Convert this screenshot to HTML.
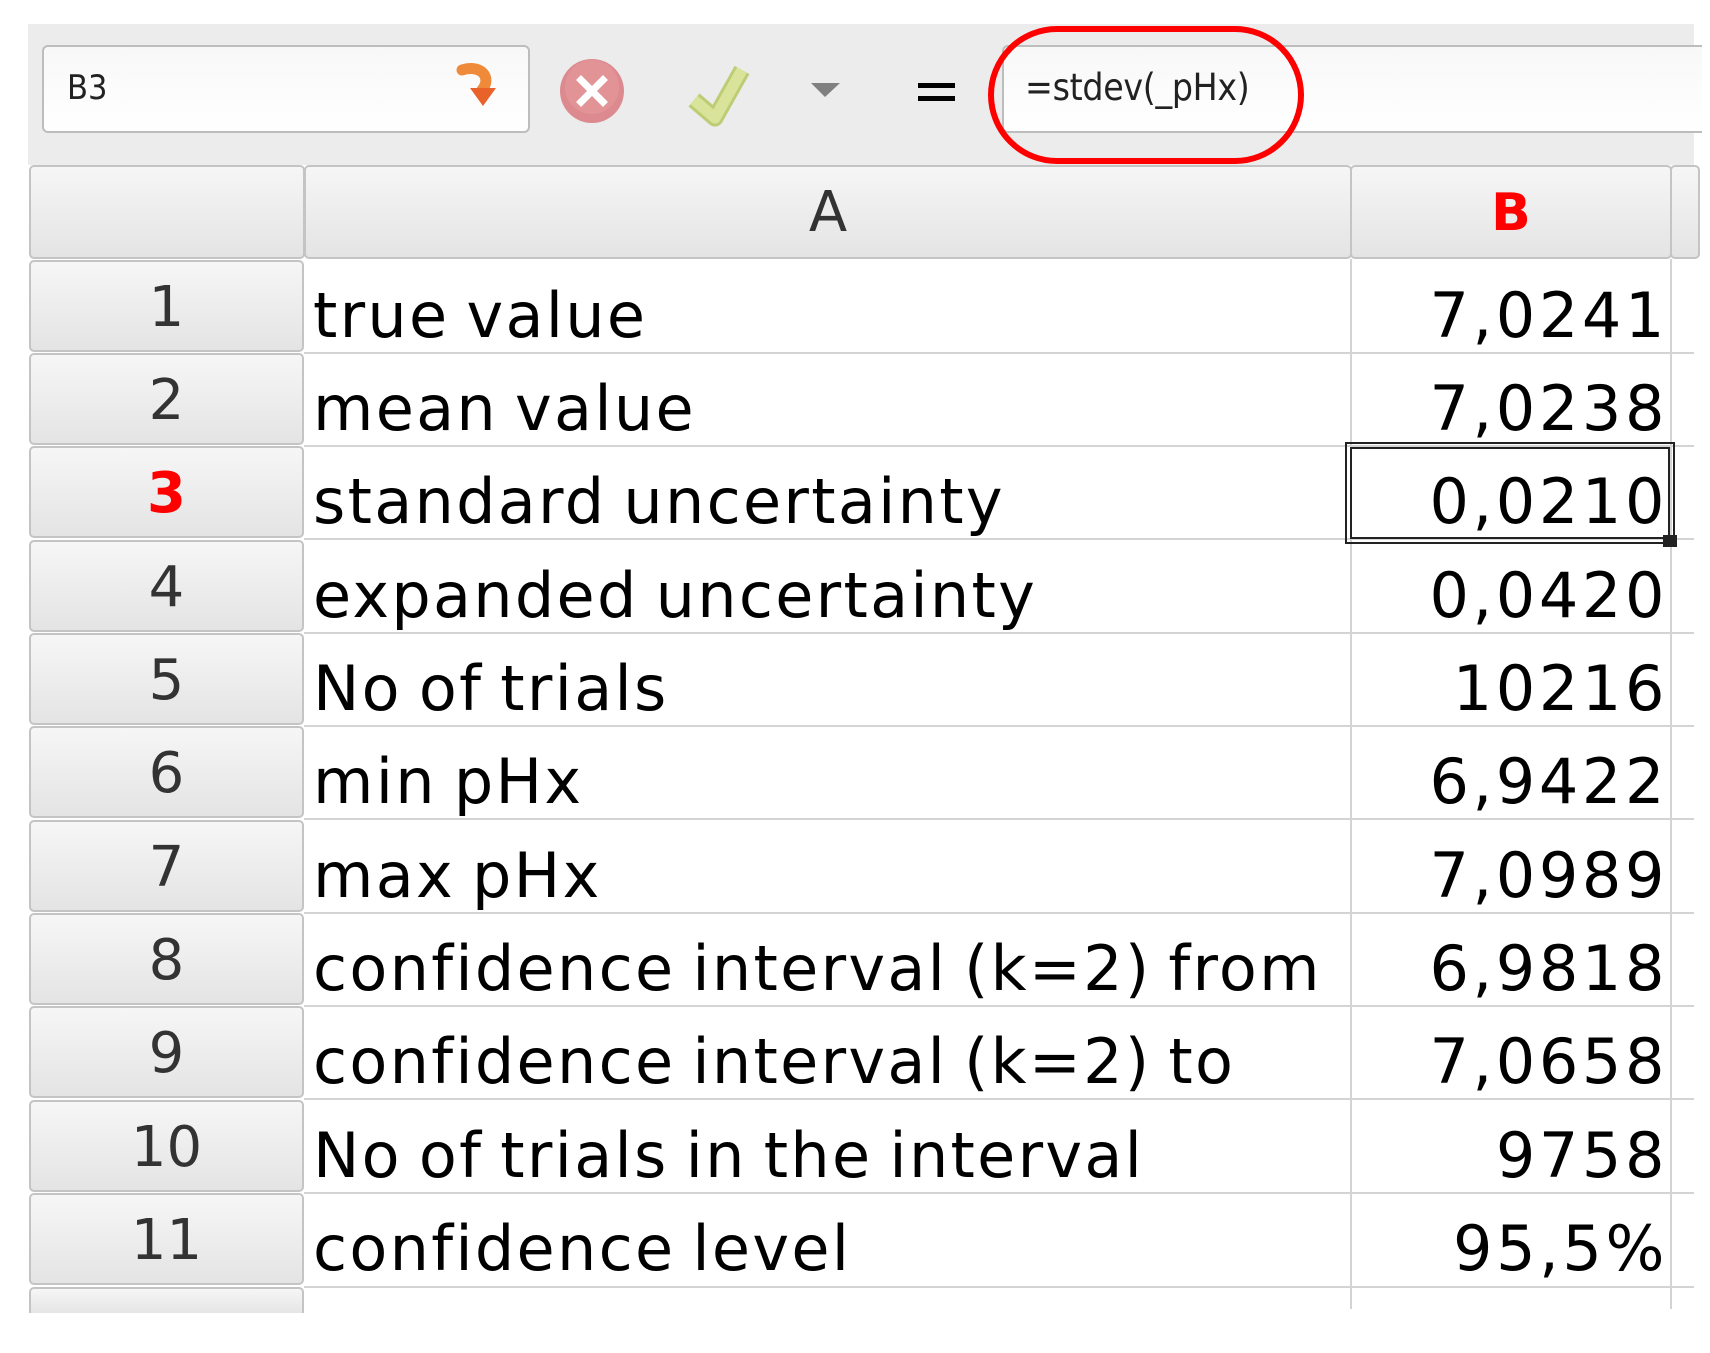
<!DOCTYPE html>
<html><head><meta charset="utf-8">
<style>
*{margin:0;padding:0;box-sizing:border-box}
body{width:1710px;height:1345px;background:#fff;position:relative;overflow:hidden;font-family:"DejaVu Sans","Liberation Sans",sans-serif}
.abs{position:absolute}
.tb{left:28px;top:24px;width:1666px;height:141px;background:#ececec}
.box{border:2px solid #bdbdbd;border-radius:6px;background:linear-gradient(#f8f8f8,#fff)}
.hdr{background:linear-gradient(#f6f6f6,#e4e4e4);border:2px solid #c4c4c4;border-radius:5px}
.rn{position:absolute;left:29px;width:275px;height:92px;text-align:center;font-size:56px;line-height:92px;color:#333}
.ta{position:absolute;left:313px;font-size:62px;letter-spacing:2.3px;word-spacing:-5px;line-height:93px;color:#000;white-space:nowrap;padding-top:9px;height:93px}
.tbv{position:absolute;right:42px;font-size:62px;letter-spacing:3.6px;line-height:93px;color:#000;white-space:nowrap;padding-top:9px;text-align:right;height:93px}
.hl{position:absolute;left:304px;width:1390px;height:2px;background:#d4d4d4}
</style></head><body>
<div class="abs tb"></div>
<div class="abs box" style="left:42px;top:45px;width:488px;height:88px"></div>
<div class="abs" style="left:67px;top:68px;font-family:'DejaVu Sans Condensed','DejaVu Sans',sans-serif;font-size:34px;color:#222">B3</div>
<svg class="abs" style="left:452px;top:60px" width="54" height="56" viewBox="0 0 54 56">
<path d="M10 10 C30 4 40 18 30 30" fill="none" stroke="#ef8a3a" stroke-width="11" stroke-linecap="round"/>
<path d="M18 28 L44 28 L31 46 Z" fill="#e8622a"/>
</svg>
<svg class="abs" style="left:556px;top:56px" width="72" height="72">
<circle cx="36" cy="35" r="32" fill="#dc8a8f"/>
<circle cx="36" cy="31" r="27" fill="#e69a9a" opacity=".6"/>
<path d="M25 24 L47 46 M47 24 L25 46" stroke="#fff" stroke-width="7" stroke-linecap="square"/>
</svg>
<svg class="abs" style="left:680px;top:58px" width="80" height="70">
<path d="M14 42 L35 60 L62 12" fill="none" stroke="#bccd75" stroke-width="17" stroke-linejoin="round"/>
<path d="M14 42 L35 60 L62 12" fill="none" stroke="#d9e49a" stroke-width="11" stroke-linejoin="round"/>
</svg>
<svg class="abs" style="left:810px;top:82px" width="32" height="16"><path d="M1 1 L30 1 L15 15Z" fill="#808080"/></svg>
<div class="abs" style="left:918px;top:83px;width:37px;height:5px;background:#000"></div>
<div class="abs" style="left:918px;top:96px;width:37px;height:5px;background:#000"></div>
<div class="abs box" style="left:1002px;top:45px;width:700px;height:88px;border-right:none;border-radius:6px 0 0 6px"></div>
<div class="abs" style="left:1025px;top:66px;font-family:'DejaVu Sans Condensed','DejaVu Sans',sans-serif;font-size:37px;color:#222;letter-spacing:-0.3px">=stdev(_pHx)</div>
<div class="abs" style="left:988px;top:26px;width:316px;height:138px;border:6px solid #f00;border-radius:70px"></div>

<div class="abs hdr" style="left:29px;top:165px;width:276px;height:94px"></div>
<div class="abs hdr" style="left:304px;top:165px;width:1048px;height:94px;text-align:center;font-size:56px;line-height:92px;color:#333">A</div>
<div class="abs hdr" style="left:1350px;top:165px;width:322px;height:94px;text-align:center;font-size:52px;line-height:92px;color:#f00;font-weight:bold">B</div>
<div class="abs hdr" style="left:1670px;top:165px;width:30px;height:94px"></div>

<div class="abs" style="left:1350px;top:259px;width:2px;height:1050px;background:#d4d4d4"></div>
<div class="abs" style="left:1670px;top:259px;width:2px;height:1050px;background:#d4d4d4"></div>

<div class="hl" style="top:352px"></div><div class="hl" style="top:445px"></div><div class="hl" style="top:538px"></div><div class="hl" style="top:632px"></div><div class="hl" style="top:725px"></div><div class="hl" style="top:818px"></div><div class="hl" style="top:912px"></div><div class="hl" style="top:1005px"></div><div class="hl" style="top:1098px"></div><div class="hl" style="top:1192px"></div><div class="hl" style="top:1286px"></div>

<div class="rn hdr" style="top:260px">1</div>
<div class="rn hdr" style="top:353px">2</div>
<div class="rn hdr" style="top:446px;color:#f00;font-weight:bold">3</div>
<div class="rn hdr" style="top:540px">4</div>
<div class="rn hdr" style="top:633px">5</div>
<div class="rn hdr" style="top:726px">6</div>
<div class="rn hdr" style="top:820px">7</div>
<div class="rn hdr" style="top:913px">8</div>
<div class="rn hdr" style="top:1006px">9</div>
<div class="rn hdr" style="top:1100px">10</div>
<div class="rn hdr" style="top:1193px">11</div>
<div class="abs hdr" style="left:29px;top:1287px;width:275px;height:30px"></div>

<div class="ta" style="top:260px">true value</div>
<div class="ta" style="top:353px">mean value</div>
<div class="ta" style="top:446px">standard uncertainty</div>
<div class="ta" style="top:540px">expanded uncertainty</div>
<div class="ta" style="top:633px">No of trials</div>
<div class="ta" style="top:726px">min pHx</div>
<div class="ta" style="top:820px">max pHx</div>
<div class="ta" style="top:913px">confidence interval (k=2) from</div>
<div class="ta" style="top:1006px">confidence interval (k=2) to</div>
<div class="ta" style="top:1100px">No of trials in the interval</div>
<div class="ta" style="top:1193px">confidence level</div>

<div class="tbv" style="top:260px">7,0241</div>
<div class="tbv" style="top:353px">7,0238</div>
<div class="tbv" style="top:446px">0,0210</div>
<div class="tbv" style="top:540px">0,0420</div>
<div class="tbv" style="top:633px">10216</div>
<div class="tbv" style="top:726px">6,9422</div>
<div class="tbv" style="top:820px">7,0989</div>
<div class="tbv" style="top:913px">6,9818</div>
<div class="tbv" style="top:1006px">7,0658</div>
<div class="tbv" style="top:1100px">9758</div>
<div class="tbv" style="top:1193px">95,5%</div>

<div class="abs" style="left:1345px;top:442px;width:330px;height:102px;border:2px solid #222"></div>
<div class="abs" style="left:1350px;top:447px;width:320px;height:92px;border:2px solid #222"></div>
<div class="abs" style="left:1663px;top:535px;width:14px;height:12px;background:#222"></div>
<div class="abs" style="left:0;top:1313px;width:1710px;height:40px;background:#fff"></div>
</body></html>
